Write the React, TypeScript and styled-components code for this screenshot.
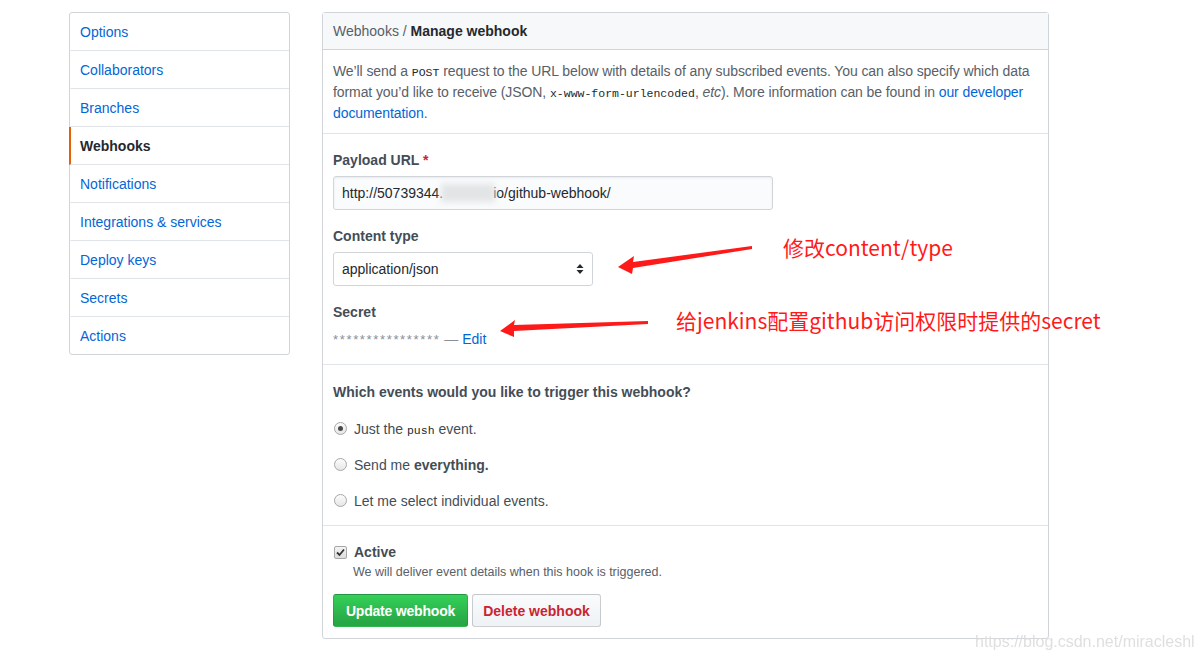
import React from 'react';
import styled, { createGlobalStyle } from 'styled-components';

const GlobalStyle = createGlobalStyle`
  html, body {
    margin: 0;
    padding: 0;
    background: #fff;
  }
  body {
    font-family: "Liberation Sans", Arial, sans-serif;
    font-size: 14px;
    color: #24292e;
  }
`;

const Page = styled.div`
  position: relative;
  width: 1200px;
  height: 661px;
  overflow: hidden;
  display: flex;
  align-items: flex-start;
  gap: 32px;
  padding: 12px 0 0 69px;
  box-sizing: border-box;
`;

const Menu = styled.nav`
  width: 221px;
  border: 1px solid #d1d5da;
  border-radius: 3px;
  box-sizing: border-box;
`;

const MenuItem = styled.div<{ $selected?: boolean }>`
  height: 37px;
  line-height: 38px;
  padding-left: 9px;
  border-bottom: 1px solid #e1e4e8;
  color: ${(p) => (p.$selected ? '#24292e' : '#0366d6')};
  font-weight: ${(p) => (p.$selected ? 600 : 400)};
  border-left: 2px solid ${(p) => (p.$selected ? '#e36209' : 'transparent')};
  margin-left: -1px;
  &:last-child {
    border-bottom: none;
  }
`;

const Box = styled.section`
  width: 727px;
  border: 1px solid #d1d5da;
  border-radius: 3px;
  box-sizing: border-box;
`;

const BoxHeader = styled.div`
  height: 36px;
  line-height: 37px;
  padding: 0 10px;
  background: #f6f8fa;
  border-bottom: 1px solid #d1d5da;
  color: #586069;
  b {
    color: #24292e;
    font-weight: 600;
  }
`;

const Section = styled.div<{ $pt?: number; $pb?: number }>`
  padding: ${(p) => p.$pt ?? 15}px 10px ${(p) => p.$pb ?? 15}px;
  & + & {
    border-top: 1px solid #e1e4e8;
  }
`;

const Description = styled.p`
  margin: 0;
  line-height: 21px;
  color: #586069;
  letter-spacing: -0.09px;
  a {
    color: #0366d6;
    text-decoration: none;
  }
`;

const Code = styled.code`
  font-family: "Liberation Mono", monospace;
  font-size: 11.5px;
  line-height: 0;
  letter-spacing: 0;
  color: #24292e;
`;

const Group = styled.div`
  & + & {
    margin-top: 16px;
  }
`;

const Label = styled.div`
  line-height: 21px;
  font-weight: 600;
  color: #444d56;
  margin-bottom: 5px;
  span {
    color: #cb2431;
  }
`;

const Input = styled.div`
  width: 440px;
  height: 34px;
  box-sizing: border-box;
  border: 1px solid #d1d5da;
  border-radius: 3px;
  background: #fafbfc;
  padding: 0 8px;
  display: flex;
  align-items: center;
  color: #24292e;
  box-shadow: inset 0 1px 2px rgba(27, 31, 35, 0.075);
`;

const Blur = styled.span`
  display: inline-block;
  width: 54px;
  height: 18px;
  background: #e2e4e6;
  filter: blur(3px);
  margin: 0 -2px;
`;

const Select = styled.div`
  width: 260px;
  height: 34px;
  box-sizing: border-box;
  border: 1px solid #d1d5da;
  border-radius: 3px;
  background: #fff;
  padding: 0 8px;
  display: flex;
  align-items: center;
  justify-content: space-between;
  color: #24292e;
`;

const SecretLine = styled.div`
  line-height: 21px;
  color: #8a9099;
  font-size: 14px;
  margin-top: 6px;
  a {
    color: #0366d6;
    text-decoration: none;
  }
`;

const Stars = styled.span`
  font-size: 13px;
  letter-spacing: 1.65px;
`;

const Question = styled.div`
  line-height: 21px;
  font-weight: 600;
  color: #444d56;
  margin-bottom: 15px;
`;

const Choice = styled.label`
  display: flex;
  align-items: center;
  gap: 7px;
  height: 21px;
  color: #444d56;
  & + & {
    margin-top: 15px;
  }
  b {
    font-weight: 600;
  }
`;

const Radio = styled.span<{ $on?: boolean }>`
  width: 11px;
  height: 11px;
  border-radius: 50%;
  border: 1px solid #a7a7a7;
  background: linear-gradient(#fcfcfc, #e6e6e6);
  display: inline-flex;
  align-items: center;
  justify-content: center;
  margin-left: 1px;
  &::after {
    content: '';
    width: 5px;
    height: 5px;
    border-radius: 50%;
    background: ${(p) => (p.$on ? '#4a4a4a' : 'transparent')};
  }
`;

const CheckRow = styled.div`
  display: flex;
  align-items: center;
  gap: 7px;
  line-height: 21px;
  font-weight: 600;
  color: #444d56;
`;

const CheckBox = styled.span`
  width: 11px;
  height: 11px;
  border: 1px solid #a7a7a7;
  border-radius: 2px;
  background: linear-gradient(#f4f4f4, #dcdcdc);
  display: inline-flex;
  align-items: center;
  justify-content: center;
  margin-left: 1px;
`;

const Note = styled.div`
  font-size: 12.5px;
  line-height: 18px;
  color: #586069;
  padding-left: 20px;
`;

const Actions = styled.div`
  display: flex;
  gap: 4px;
  margin-top: 13px;
`;

const Button = styled.button<{ $danger?: boolean }>`
  height: 33px;
  padding: 0 4px;
  border-radius: 3px;
  font-family: inherit;
  font-size: 14px;
  font-weight: 600;
  white-space: nowrap;
  border: 1px solid ${(p) => (p.$danger ? 'rgba(27,31,35,0.2)' : 'rgba(27,31,35,0.15)')};
  color: ${(p) => (p.$danger ? '#cb2431' : '#fff')};
  background: ${(p) =>
    p.$danger
      ? 'linear-gradient(-180deg, #fafbfc 0%, #eff3f6 90%)'
      : 'linear-gradient(-180deg, #34d058 0%, #28a745 90%)'};
  width: ${(p) => (p.$danger ? 129 : 135)}px;
  letter-spacing: ${(p) => (p.$danger ? '0' : '-0.2px')};
`;

const Overlay = styled.svg`
  position: absolute;
  left: 0;
  top: 0;
  pointer-events: none;
`;

const Annotation = styled.div<{ $x: number; $y: number }>`
  position: absolute;
  left: ${(p) => p.$x}px;
  top: ${(p) => p.$y}px;
  color: #ff1a1a;
  font-family: "Noto Sans CJK SC", "Noto Sans", sans-serif;
  font-size: 21px;
  line-height: 26px;
  white-space: nowrap;
`;

const Watermark = styled.div`
  position: absolute;
  left: 975px;
  top: 633px;
  color: #dcdcdc;
  font-family: "Liberation Sans", Arial, sans-serif;
  font-size: 16px;
  opacity: 0.9;
`;

const menu = [
  'Options',
  'Collaborators',
  'Branches',
  'Webhooks',
  'Notifications',
  'Integrations & services',
  'Deploy keys',
  'Secrets',
  'Actions',
];

function SelectArrows() {
  return (
    <svg width="8" height="12" viewBox="0 0 8 12">
      <path d="M4 1 L7.5 5 L0.5 5 Z" fill="#24292e" />
      <path d="M4 11 L7.5 7 L0.5 7 Z" fill="#24292e" />
    </svg>
  );
}

export default function App() {
  return (
    <>
      <GlobalStyle />
      <Page>
        <Menu>
          {menu.map((m) => (
            <MenuItem key={m} $selected={m === 'Webhooks'}>
              {m}
            </MenuItem>
          ))}
        </Menu>

        <Box>
          <BoxHeader>
            Webhooks / <b>Manage webhook</b>
          </BoxHeader>

          <Section $pt={11} $pb={9}>
            <Description>
              We’ll send a <Code>POST</Code> request to the URL below with details of any
              subscribed events. You can also specify which data format you’d like to receive
              (JSON, <Code>x-www-form-urlencoded</Code>, <i>etc</i>). More information can be
              found in <a href="#">our developer documentation</a>.
            </Description>
          </Section>

          <Section $pt={16} $pb={14}>
            <Group>
              <Label>
                Payload URL <span>*</span>
              </Label>
              <Input>
                http://50739344.<Blur />io/github-webhook/
              </Input>
            </Group>
            <Group>
              <Label>Content type</Label>
              <Select>
                application/json
                <SelectArrows />
              </Select>
            </Group>
            <Group>
              <Label>Secret</Label>
              <SecretLine>
                <Stars>****************</Stars> — <a href="#">Edit</a>
              </SecretLine>
            </Group>
          </Section>

          <Section $pt={17} $pb={14}>
            <Question>Which events would you like to trigger this webhook?</Question>
            <Choice>
              <Radio $on />
              <span>
                Just the <Code>push</Code> event.
              </span>
            </Choice>
            <Choice>
              <Radio />
              <span>
                Send me <b>everything.</b>
              </span>
            </Choice>
            <Choice>
              <Radio />
              <span>Let me select individual events.</span>
            </Choice>
          </Section>

          <Section $pt={16} $pb={11}>
            <CheckRow>
              <CheckBox>
                <svg width="9" height="9" viewBox="0 0 9 9">
                  <path d="M1 4.5 L3.5 7 L8 1.5" stroke="#333" strokeWidth="1.8" fill="none" />
                </svg>
              </CheckBox>
              Active
            </CheckRow>
            <Note>We will deliver event details when this hook is triggered.</Note>
            <Actions>
              <Button>Update webhook</Button>
              <Button $danger>Delete webhook</Button>
            </Actions>
          </Section>
        </Box>

        <Overlay width="1200" height="661">
          <polygon points="752,246 633,262 634,256 618,267 632,274 633,268 752,249" fill="#ff1a1a" />
          <polygon points="648,321 514,325 515,320 500,331 514,337 514,331 648,324" fill="#ff1a1a" />
        </Overlay>
        <Annotation $x={783} $y={234}>修改content/type</Annotation>
        <Annotation $x={676} $y={307}>给jenkins配置github访问权限时提供的secret</Annotation>
        <Watermark>https://blog.csdn.net/miracleshl</Watermark>
      </Page>
    </>
  );
}
